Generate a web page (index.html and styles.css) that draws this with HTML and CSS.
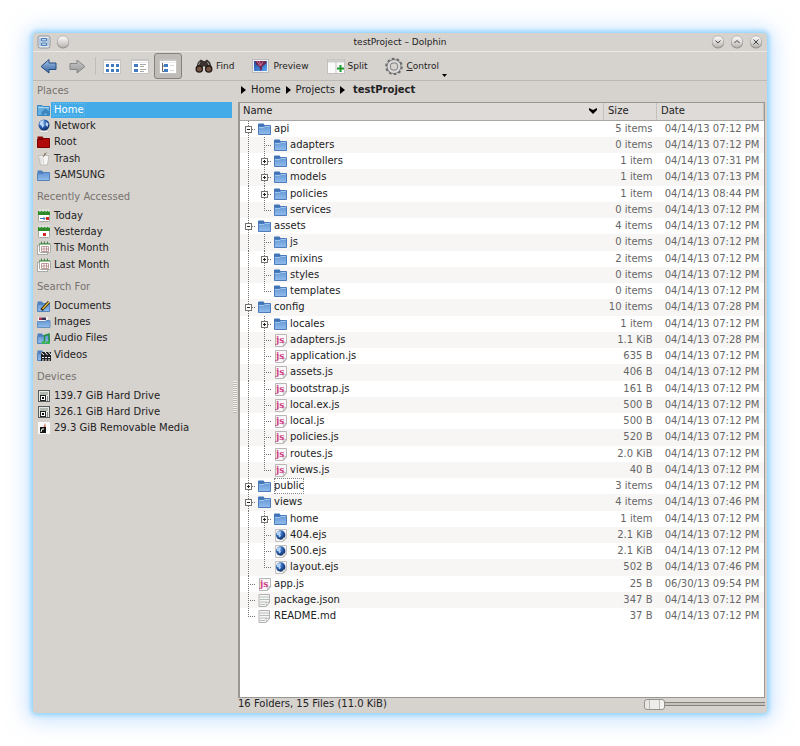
FILE: index.html
```html
<!DOCTYPE html>
<html lang="en">
<head>
    <meta charset="UTF-8">
    <meta name="viewport" content="width=device-width, initial-scale=1.0">
    <title>testProject – Dolphin</title>
    <link rel="stylesheet" href="styles.css">
</head>
<body>
    <!-- icon sprite -->
    <svg class="sprite" width="0" height="0" aria-hidden="true">
        <defs>
            <linearGradient id="blue" x1="0" y1="0" x2="0" y2="1"><stop offset="0" stop-color="#6396d3"/><stop offset="1" stop-color="#92bdec"/></linearGradient>
            <linearGradient id="silver" x1="0" y1="0" x2="0" y2="1"><stop offset="0" stop-color="#ffffff"/><stop offset="1" stop-color="#b9b5b1"/></linearGradient>
            <linearGradient id="arrow" x1="0" y1="0" x2="0" y2="1"><stop offset="0" stop-color="#a5c4ea"/><stop offset="1" stop-color="#32619f"/></linearGradient>
            <linearGradient id="grayArrow" x1="0" y1="0" x2="0" y2="1"><stop offset="0" stop-color="#c9c9c9"/><stop offset="1" stop-color="#969696"/></linearGradient>
            <linearGradient id="photo" x1="0" y1="0" x2="1" y2="1"><stop offset="0" stop-color="#1f4fa8"/><stop offset="1" stop-color="#58a5ee"/></linearGradient>
            <radialGradient id="earth" cx=".35" cy=".3" r=".8"><stop offset="0" stop-color="#7fb0ea"/><stop offset=".5" stop-color="#2559a8"/><stop offset="1" stop-color="#0b2557"/></radialGradient>
        </defs>

        <!-- tree guides -->
        <symbol id="g-line" viewBox="0 0 16 17"><path d="M8.5 0V17" class="dots"/></symbol>
        <symbol id="g-tee" viewBox="0 0 16 17"><path d="M8.5 0V17M10 8.500H16" class="dots"/></symbol>
        <symbol id="g-end" viewBox="0 0 16 17"><path d="M8.500 0V9M10 8.500H16" class="dots"/></symbol>
        <symbol id="g-box" viewBox="0 0 16 17"><path d="M8.500 0V17M12 8.500H16" class="dots"/><rect x="5.500" y="5.500" width="6" height="6" fill="#fff" stroke="#77736f"/><path d="M7 8.500H10" stroke="#222"/></symbol>
        <symbol id="g-plus" viewBox="0 0 16 17"><use href="#g-box"/><path d="M8.500 7V10" stroke="#222"/></symbol>

        <symbol id="folder" viewBox="0 0 16 16">
            <path d="M2 3.500L2.500 2.500H7.500L8.500 4H14V9H2Z" fill="#3f74b8"/>
            <path d="M2.500 5.500H7.500L8.500 4.500H14.500V13.500H2.500Z" fill="url(#blue)" stroke="#4c7dba"/>
            <path d="M3 6.500H8L9 5.500H14" stroke="#9fc5ee" fill="none"/>
        </symbol>
        <symbol id="page" viewBox="0 0 16 16">
            <path d="M3.500 2.500H14.500V11L11.500 14.500H3.500Z" fill="#fbf7f9" stroke="#b9b5b5"/>
            <path d="M14 10.500L11.500 14L11 11Z" fill="#fff" stroke="#999" stroke-width=".6"/>
        </symbol>
        <symbol id="ejs" viewBox="0 0 16 16">
            <path d="M3.500 2.500H14.500V11L11.500 14.500H3.500Z" fill="#f5f5f5" stroke="#c4c2c0"/>
            <circle cx="8.700" cy="8" r="4.700" fill="url(#earth)"/>
            <path d="M5 5.500Q7 3.500 9 4.500L8 7L9 9L7 10.500L6.500 8L5 8Z" fill="#b5d4f6"/>
            <path d="M14 10.500L11.500 14L11 11Z" fill="#fff" stroke="#aaa" stroke-width=".6"/>
        </symbol>
        <symbol id="text" viewBox="0 0 16 16">
            <path d="M3 2.500H13.500V10.500L10 14.500H3Z" fill="#f7f7f7" stroke="#b2b0ae"/>
            <path d="M4 5H13M4 7.500H13M4 10H11M4 12.500H9" stroke="#b4bcbb"/>
            <path d="M13.500 10L10.500 14L10 10.500Z" fill="#fff" stroke="#999" stroke-width=".6"/>
        </symbol>

        <symbol id="home" viewBox="0 0 14 14">
            <path d="M.5 2.500H5L6 3.500H12.500V12.500H.5Z" fill="#66aee0" stroke="#3987c2"/>
            <path d="M1 4.500H12" stroke="#a6d7f5"/>
            <path d="M4.500 13V9L8.500 5.500L12.500 9V13H10V10.500H7V13Z" fill="#3e86bf"/>
        </symbol>
        <symbol id="network" viewBox="0 0 14 14">
            <ellipse cx="7" cy="12.500" rx="5" ry="1.200" fill="#f0efee" stroke="#b5b1ad" stroke-width=".5"/>
            <circle cx="7" cy="6" r="5.500" fill="url(#earth)"/>
            <path d="M3 3Q5 .8 7 1.500L6 4.500L7.500 6L5.500 9L4.500 6.500L2.500 5.500ZM9 3L11.500 4.500L10.500 8L8.500 6Z" fill="#bcd7f6"/>
        </symbol>
        <symbol id="root" viewBox="0 0 14 14">
            <path d="M.5 1.500H5.500L6.500 3H12V5H.5Z" fill="#8b0000"/>
            <path d="M.5 4.500H6L7 3.500H12.500V12.500H.5Z" fill="#b00a0a" stroke="#780000"/>
        </symbol>
        <symbol id="trash" viewBox="0 0 14 14">
            <path d="M1.500 3.500H12L10.500 13H3.500Z" fill="#f6f6f5" stroke="#c0bdba"/>
            <path d="M4 5V12M6 5L6.500 12" stroke="#d4d2cf"/>
            <path d="M6 5L9.500 .5M7.500 4L8 1" stroke="#8b7a61" fill="none"/>
        </symbol>
        <symbol id="cal-day" viewBox="0 0 14 14">
            <rect x="1.500" y="2.500" width="11" height="10" rx="1" fill="#fff" stroke="#a5a5a1"/>
            <path d="M1 2H13V6H1Z" fill="#2b8b2b"/><path d="M3 0V3M6 0V3M9 0V3M12 0V3" stroke="#e6f3e4"/>
            <rect x="6" y="8" width="3" height="3" fill="#ce2525"/>
        </symbol>
        <symbol id="cal-today" viewBox="0 0 14 14">
            <rect x="1.500" y="2.500" width="11" height="10" rx="1" fill="#fff" stroke="#a5a5a1"/>
            <path d="M1 2H13V6H1Z" fill="#2b8b2b"/><path d="M3 0V3M6 0V3M9 0V3M12 0V3" stroke="#e6f3e4"/>
            <path d="M3 9.500H8M6.500 8L8 9.500L6.500 11" stroke="#3c79bd" fill="none"/><rect x="9" y="8" width="3" height="3" fill="#ce2525"/>
        </symbol>
        <symbol id="cal-month" viewBox="0 0 14 14">
            <rect x=".5" y="4.500" width="10" height="9" fill="#fff" stroke="#aaa"/>
            <rect x="2.500" y="2.500" width="11" height="9" rx="1" fill="#fff" stroke="#a5a5a1"/>
            <path d="M2 3H13" stroke="#2b8b2b"/><path d="M4.500 .5V3M7.500 .5V3M10.500 .5V3" stroke="#4c8050"/>
            <path d="M4.500 5.500H11.500V10.500H4.500ZM4 8H12M7 5V11M9.500 5V11" fill="none" stroke="#b68585" stroke-width=".8"/>
        </symbol>
        <symbol id="place-folder" viewBox="0 0 14 14">
            <path d="M.5 2.500H5L6 4H12V6H.5Z" fill="#4b7fc0"/>
            <path d="M.5 5.500H6L7 4.500H12.500V12.500H.5Z" fill="url(#blue)" stroke="#5583bc"/>
        </symbol>
        <symbol id="documents" viewBox="0 0 14 14">
            <use href="#place-folder"/>
            <path d="M4.500 11L12 3" stroke="#2d2412" stroke-width="3"/><path d="M5.500 10L12 3" stroke="#efc53d" stroke-width="1.300"/>
        </symbol>
        <symbol id="images" viewBox="0 0 14 14">
            <path d="M1 2H11V8H1Z" fill="#f7f1f4"/><path d="M2 2.500H5V5H2Z" fill="#a93252"/><path d="M5 2.500H9V5H5Z" fill="#363052"/>
            <path d="M.5 6.500H8L9 5.500H13V12.500H.5Z" fill="url(#blue)" stroke="#6890bf"/>
        </symbol>
        <symbol id="audio" viewBox="0 0 14 14">
            <use href="#place-folder"/>
            <path d="M7.500 11V4.500L12 3V11" stroke="#239239" stroke-width="1.500" fill="none"/>
            <ellipse cx="6.500" cy="11.500" rx="2" ry="1.500" fill="#35b84d"/><ellipse cx="11" cy="11.500" rx="2" ry="1.500" fill="#35b84d"/>
        </symbol>
        <symbol id="videos" viewBox="0 0 14 14">
            <use href="#place-folder"/>
            <path d="M4 4H14V13H4Z" fill="#202126"/><path d="M4 4.500L7 7M8 4L10.500 7M11.500 4L14 7" stroke="#fff"/>
            <path d="M5 9.500H13M5 12H13" stroke="#eee" stroke-dasharray="2 1"/>
        </symbol>
        <symbol id="drive" viewBox="0 0 14 14">
            <rect x="1.500" y="1.500" width="11" height="11" fill="#e7e9e5" stroke="#595d59"/>
            <path d="M3 3H11V6H3Z" fill="#aeb7b0"/>
            <rect x="3.500" y="6.500" width="5" height="5" fill="#fff" stroke="#222"/><rect x="5" y="8" width="2" height="2" fill="#111"/>
            <path d="M10.500 7V12" stroke="#889188"/>
        </symbol>
        <symbol id="removable" viewBox="0 0 14 14">
            <path d="M1 1H13V13H1Z" fill="#f9f9f8"/><path d="M3 6H9V12H3Z" fill="#161616"/>
            <path d="M4 11L5 8H7" stroke="#fff" fill="none"/><path d="M6.500 6L8 2L9 6Z" fill="#d47a5f"/>
        </symbol>

        <!-- toolbar icons -->
        <symbol id="back" viewBox="0 0 18 18"><path d="M1 9.500L9 2.500V6H16V12.500H9V16Z" fill="url(#arrow)" stroke="#254c7f" stroke-linejoin="round"/></symbol>
        <symbol id="forward" viewBox="0 0 18 18"><path d="M17 9.500L9 3V6.500H2V12.500H9V16Z" fill="url(#grayArrow)" stroke="#888" stroke-linejoin="round"/></symbol>
        <symbol id="sheet" viewBox="0 0 18 18"><rect x=".5" y="2.500" width="17" height="14" fill="#fff" stroke="#c7c5c3"/><path d="M1 3.500H17" stroke="#c9c9c9"/><path d="M1 5.500H17" stroke="#ececec"/></symbol>
        <symbol id="view-icons" viewBox="0 0 18 18"><use href="#sheet"/><path d="M3 7H6V10H3ZM8 7H11V10H8ZM13 7H16V10H13ZM3 12H6V15H3ZM8 12H11V15H8ZM13 12H16V15H13Z" fill="#407ac0"/></symbol>
        <symbol id="view-details" viewBox="0 0 18 18"><use href="#sheet"/><path d="M3 7H7V10H3ZM3 12H7V15H3Z" fill="#407ac0"/><path d="M9 7.500H15M9 9.500H13M9 12.500H15M9 14.500H13" stroke="#aaa"/></symbol>
        <symbol id="view-tree" viewBox="0 0 18 18"><use href="#sheet"/><path d="M3.500 6V14.500H6M3.500 9H6" fill="none" stroke="#666"/><path d="M5 7H9V10H5ZM5 12H9V15H5Z" fill="#407ac0"/><path d="M11 8.500H15M11 13.500H15" stroke="#d5d5d5"/></symbol>
        <symbol id="find" viewBox="0 0 18 18">
            <path d="M3 5L6 2.500L8.500 4H10L12 2.500L15 5L17 11H11L9 9L7 11H1Z" fill="#39322f"/>
            <circle cx="4.300" cy="12" r="3.800" fill="#251d1a"/><circle cx="13.700" cy="12" r="3.800" fill="#251d1a"/>
            <circle cx="4.300" cy="12.200" r="2.400" fill="#785542"/><circle cx="13.700" cy="12.200" r="2.400" fill="#785542"/>
            <path d="M5 5L3.500 8M12.500 5L14 8" stroke="#aaa09b"/>
        </symbol>
        <symbol id="preview" viewBox="0 0 18 18">
            <rect x=".5" y="2.500" width="16" height="13" fill="#edf1f6" stroke="#bbb"/><path d="M2 4H15V14H2Z" fill="url(#photo)"/>
            <path d="M3 4H14L14.500 6L10 10L9.500 13.500H8L7.500 10L4 7.500Z" fill="#6d2850"/><path d="M5 4L8 9M7.500 4L8.500 8M11 4.500L8.500 9" stroke="#cf6c92" fill="none"/>
        </symbol>
        <symbol id="split" viewBox="0 0 18 18"><rect x=".5" y="2.500" width="17" height="14" fill="#fafafa" stroke="#c2c0be"/><path d="M1 4H17" stroke="#d0cecd" stroke-width="3"/><path d="M9 5V16" stroke="#c7c5c3"/><path d="M13.500 8V15M10 11.500H17" stroke="#1d9c2c" stroke-width="2"/></symbol>
        <symbol id="control" viewBox="0 0 18 18">
            <circle cx="9" cy="9.500" r="7.500" fill="none" stroke="#6c6c6c" stroke-width="2.500" stroke-dasharray="2.600 2.110"/>
            <circle cx="9" cy="9.500" r="5.300" fill="none" stroke="#6c6c6c" stroke-width="4"/><circle cx="9" cy="9.500" r="5.300" fill="none" stroke="#d8d8d8" stroke-width="2.600"/>
        </symbol>
        <symbol id="app" viewBox="0 0 14 14"><rect x="1" y="1" width="12" height="12" rx="2" fill="#e9edf2" stroke="#8d949b"/><path d="M3 3V11M11 3V11" stroke="#7ea5d0"/><path d="M4.500 3.500H9.500V6H4.500ZM4.500 8H9.500V10.500H4.500Z" fill="#b8d5f2" stroke="#4a7bb3"/></symbol>
        <symbol id="knob" viewBox="0 0 14 14"><circle cx="7" cy="7.500" r="6" fill="#8c8884"/><circle cx="7" cy="6.700" r="5.800" fill="url(#silver)" stroke="#aaa6a2" stroke-width=".6"/></symbol>
    </svg>

    <div class="window">
        <header class="titlebar">
            <div class="knobs">
                <button aria-label="Window menu"><svg width="14" height="14"><use href="#app"/></svg></button>
                <button aria-label="All desktops"><svg width="14" height="14"><use href="#knob"/></svg></button>
            </div>
            <h1>testProject – Dolphin</h1>
            <div class="knobs right">
                <button aria-label="Minimize"><svg width="14" height="14"><use href="#knob"/><path d="M4.500 5.500L7 8L9.500 5.500" class="mark"/></svg></button>
                <button aria-label="Maximize"><svg width="14" height="14"><use href="#knob"/><path d="M4.500 8L7 5.500L9.500 8" class="mark"/></svg></button>
                <button aria-label="Close"><svg width="14" height="14"><use href="#knob"/><path d="M4.500 4.500L9.500 9.500M9.500 4.500L4.500 9.500" class="mark"/></svg></button>
            </div>
        </header>

        <div class="toolbar">
            <button aria-label="Back"><svg width="18" height="18"><use href="#back"/></svg></button>
            <button aria-label="Forward"><svg width="18" height="18"><use href="#forward"/></svg></button>
            <span class="divider"></span>
            <button aria-label="Icons"><svg width="18" height="18"><use href="#view-icons"/></svg></button>
            <button aria-label="Compact"><svg width="18" height="18"><use href="#view-details"/></svg></button>
            <button class="pressed" aria-label="Details"><svg width="18" height="18"><use href="#view-tree"/></svg></button>
            <button class="labelled"><svg width="18" height="18"><use href="#find"/></svg>Find</button>
            <button class="labelled"><svg width="18" height="18"><use href="#preview"/></svg>Preview</button>
            <button class="labelled"><svg width="18" height="18"><use href="#split"/></svg>Split</button>
            <button class="labelled menu"><svg width="18" height="18"><use href="#control"/></svg><span><u>C</u>ontrol</span><svg class="drop" width="5" height="3"><path d="M0 0H5L2.500 3Z"/></svg></button>
        </div>

        <div class="content">
            <nav class="places">
                <section>
                    <h2>Places</h2>
                    <ul>
                        <li><svg width="14" height="14"><use href="#home"/></svg><a href="#" class="selected"><span>Home</span></a></li>
                        <li><svg width="14" height="14"><use href="#network"/></svg><a href="#">Network</a></li>
                        <li><svg width="14" height="14"><use href="#root"/></svg><a href="#">Root</a></li>
                        <li><svg width="14" height="14"><use href="#trash"/></svg><a href="#">Trash</a></li>
                        <li><svg width="14" height="14"><use href="#place-folder"/></svg><a href="#">SAMSUNG</a></li>
                    </ul>
                </section>
                <section>
                    <h2>Recently Accessed</h2>
                    <ul>
                        <li><svg width="14" height="14"><use href="#cal-today"/></svg><a href="#">Today</a></li>
                        <li><svg width="14" height="14"><use href="#cal-day"/></svg><a href="#">Yesterday</a></li>
                        <li><svg width="14" height="14"><use href="#cal-month"/></svg><a href="#">This Month</a></li>
                        <li><svg width="14" height="14"><use href="#cal-month"/></svg><a href="#">Last Month</a></li>
                    </ul>
                </section>
                <section>
                    <h2>Search For</h2>
                    <ul>
                        <li><svg width="14" height="14"><use href="#documents"/></svg><a href="#">Documents</a></li>
                        <li><svg width="14" height="14"><use href="#images"/></svg><a href="#">Images</a></li>
                        <li><svg width="14" height="14"><use href="#audio"/></svg><a href="#">Audio Files</a></li>
                        <li><svg width="14" height="14"><use href="#videos"/></svg><a href="#">Videos</a></li>
                    </ul>
                </section>
                <section>
                    <h2>Devices</h2>
                    <ul>
                        <li><svg width="14" height="14"><use href="#drive"/></svg><a href="#">139.7 GiB Hard Drive</a></li>
                        <li><svg width="14" height="14"><use href="#drive"/></svg><a href="#">326.1 GiB Hard Drive</a></li>
                        <li><svg width="14" height="14"><use href="#removable"/></svg><a href="#">29.3 GiB Removable Media</a></li>
                    </ul>
                </section>
            </nav>

            <div class="splitter"><span></span></div>

            <main>
                <nav class="crumbs">
                    <svg width="5" height="8"><path d="M0 0L5 4L0 8Z"/></svg><a href="#">Home</a>
                    <svg width="5" height="8"><path d="M0 0L5 4L0 8Z"/></svg><a href="#">Projects</a>
                    <svg width="5" height="8"><path d="M0 0L5 4L0 8Z"/></svg><a href="#" class="current">testProject</a>
                </nav>

                <div class="listing">
                    <table>
                        <thead>
                            <tr>
                                <th><div class="sort">Name<svg width="8" height="6"><path d="M0 0L4 2L8 0V2L4 6L0 2Z"/></svg></div></th>
                                <th class="size">Size</th>
                                <th class="date">Date</th>
                            </tr>
                        </thead>
                        <tbody>
                            <tr><td><div class="node"><button aria-label="Collapse"><svg class="guide"><use href="#g-box"/></svg></button><svg class="icon"><use href="#folder"/></svg><span>api</span></div></td><td>5 items</td><td>04/14/13 07:12 PM</td></tr>
                            <tr><td><div class="node"><svg class="guide"><use href="#g-line"/></svg><svg class="guide"><use href="#g-tee"/></svg><svg class="icon"><use href="#folder"/></svg><span>adapters</span></div></td><td>0 items</td><td>04/14/13 07:12 PM</td></tr>
                            <tr><td><div class="node"><svg class="guide"><use href="#g-line"/></svg><button aria-label="Expand"><svg class="guide"><use href="#g-plus"/></svg></button><svg class="icon"><use href="#folder"/></svg><span>controllers</span></div></td><td>1 item</td><td>04/14/13 07:31 PM</td></tr>
                            <tr><td><div class="node"><svg class="guide"><use href="#g-line"/></svg><button aria-label="Expand"><svg class="guide"><use href="#g-plus"/></svg></button><svg class="icon"><use href="#folder"/></svg><span>models</span></div></td><td>1 item</td><td>04/14/13 07:13 PM</td></tr>
                            <tr><td><div class="node"><svg class="guide"><use href="#g-line"/></svg><button aria-label="Expand"><svg class="guide"><use href="#g-plus"/></svg></button><svg class="icon"><use href="#folder"/></svg><span>policies</span></div></td><td>1 item</td><td>04/14/13 08:44 PM</td></tr>
                            <tr><td><div class="node"><svg class="guide"><use href="#g-line"/></svg><svg class="guide"><use href="#g-end"/></svg><svg class="icon"><use href="#folder"/></svg><span>services</span></div></td><td>0 items</td><td>04/14/13 07:12 PM</td></tr>
                            <tr><td><div class="node"><button aria-label="Collapse"><svg class="guide"><use href="#g-box"/></svg></button><svg class="icon"><use href="#folder"/></svg><span>assets</span></div></td><td>4 items</td><td>04/14/13 07:12 PM</td></tr>
                            <tr><td><div class="node"><svg class="guide"><use href="#g-line"/></svg><svg class="guide"><use href="#g-tee"/></svg><svg class="icon"><use href="#folder"/></svg><span>js</span></div></td><td>0 items</td><td>04/14/13 07:12 PM</td></tr>
                            <tr><td><div class="node"><svg class="guide"><use href="#g-line"/></svg><button aria-label="Expand"><svg class="guide"><use href="#g-plus"/></svg></button><svg class="icon"><use href="#folder"/></svg><span>mixins</span></div></td><td>2 items</td><td>04/14/13 07:12 PM</td></tr>
                            <tr><td><div class="node"><svg class="guide"><use href="#g-line"/></svg><svg class="guide"><use href="#g-tee"/></svg><svg class="icon"><use href="#folder"/></svg><span>styles</span></div></td><td>0 items</td><td>04/14/13 07:12 PM</td></tr>
                            <tr><td><div class="node"><svg class="guide"><use href="#g-line"/></svg><svg class="guide"><use href="#g-end"/></svg><svg class="icon"><use href="#folder"/></svg><span>templates</span></div></td><td>0 items</td><td>04/14/13 07:12 PM</td></tr>
                            <tr><td><div class="node"><button aria-label="Collapse"><svg class="guide"><use href="#g-box"/></svg></button><svg class="icon"><use href="#folder"/></svg><span>config</span></div></td><td>10 items</td><td>04/14/13 07:28 PM</td></tr>
                            <tr><td><div class="node"><svg class="guide"><use href="#g-line"/></svg><button aria-label="Expand"><svg class="guide"><use href="#g-plus"/></svg></button><svg class="icon"><use href="#folder"/></svg><span>locales</span></div></td><td>1 item</td><td>04/14/13 07:12 PM</td></tr>
                            <tr><td><div class="node"><svg class="guide"><use href="#g-line"/></svg><svg class="guide"><use href="#g-tee"/></svg><svg class="icon"><use href="#page"/><text x="4" y="11" class="js-mark">js</text></svg><span>adapters.js</span></div></td><td>1.1 KiB</td><td>04/14/13 07:28 PM</td></tr>
                            <tr><td><div class="node"><svg class="guide"><use href="#g-line"/></svg><svg class="guide"><use href="#g-tee"/></svg><svg class="icon"><use href="#page"/><text x="4" y="11" class="js-mark">js</text></svg><span>application.js</span></div></td><td>635 B</td><td>04/14/13 07:12 PM</td></tr>
                            <tr><td><div class="node"><svg class="guide"><use href="#g-line"/></svg><svg class="guide"><use href="#g-tee"/></svg><svg class="icon"><use href="#page"/><text x="4" y="11" class="js-mark">js</text></svg><span>assets.js</span></div></td><td>406 B</td><td>04/14/13 07:12 PM</td></tr>
                            <tr><td><div class="node"><svg class="guide"><use href="#g-line"/></svg><svg class="guide"><use href="#g-tee"/></svg><svg class="icon"><use href="#page"/><text x="4" y="11" class="js-mark">js</text></svg><span>bootstrap.js</span></div></td><td>161 B</td><td>04/14/13 07:12 PM</td></tr>
                            <tr><td><div class="node"><svg class="guide"><use href="#g-line"/></svg><svg class="guide"><use href="#g-tee"/></svg><svg class="icon"><use href="#page"/><text x="4" y="11" class="js-mark">js</text></svg><span>local.ex.js</span></div></td><td>500 B</td><td>04/14/13 07:12 PM</td></tr>
                            <tr><td><div class="node"><svg class="guide"><use href="#g-line"/></svg><svg class="guide"><use href="#g-tee"/></svg><svg class="icon"><use href="#page"/><text x="4" y="11" class="js-mark">js</text></svg><span>local.js</span></div></td><td>500 B</td><td>04/14/13 07:12 PM</td></tr>
                            <tr><td><div class="node"><svg class="guide"><use href="#g-line"/></svg><svg class="guide"><use href="#g-tee"/></svg><svg class="icon"><use href="#page"/><text x="4" y="11" class="js-mark">js</text></svg><span>policies.js</span></div></td><td>520 B</td><td>04/14/13 07:12 PM</td></tr>
                            <tr><td><div class="node"><svg class="guide"><use href="#g-line"/></svg><svg class="guide"><use href="#g-tee"/></svg><svg class="icon"><use href="#page"/><text x="4" y="11" class="js-mark">js</text></svg><span>routes.js</span></div></td><td>2.0 KiB</td><td>04/14/13 07:12 PM</td></tr>
                            <tr><td><div class="node"><svg class="guide"><use href="#g-line"/></svg><svg class="guide"><use href="#g-end"/></svg><svg class="icon"><use href="#page"/><text x="4" y="11" class="js-mark">js</text></svg><span>views.js</span></div></td><td>40 B</td><td>04/14/13 07:12 PM</td></tr>
                            <tr><td><div class="node"><button aria-label="Expand"><svg class="guide"><use href="#g-plus"/></svg></button><svg class="icon"><use href="#folder"/></svg><span class="focused">public</span></div></td><td>3 items</td><td>04/14/13 07:12 PM</td></tr>
                            <tr><td><div class="node"><button aria-label="Collapse"><svg class="guide"><use href="#g-box"/></svg></button><svg class="icon"><use href="#folder"/></svg><span>views</span></div></td><td>4 items</td><td>04/14/13 07:46 PM</td></tr>
                            <tr><td><div class="node"><svg class="guide"><use href="#g-line"/></svg><button aria-label="Expand"><svg class="guide"><use href="#g-plus"/></svg></button><svg class="icon"><use href="#folder"/></svg><span>home</span></div></td><td>1 item</td><td>04/14/13 07:12 PM</td></tr>
                            <tr><td><div class="node"><svg class="guide"><use href="#g-line"/></svg><svg class="guide"><use href="#g-tee"/></svg><svg class="icon"><use href="#ejs"/></svg><span>404.ejs</span></div></td><td>2.1 KiB</td><td>04/14/13 07:12 PM</td></tr>
                            <tr><td><div class="node"><svg class="guide"><use href="#g-line"/></svg><svg class="guide"><use href="#g-tee"/></svg><svg class="icon"><use href="#ejs"/></svg><span>500.ejs</span></div></td><td>2.1 KiB</td><td>04/14/13 07:12 PM</td></tr>
                            <tr><td><div class="node"><svg class="guide"><use href="#g-line"/></svg><svg class="guide"><use href="#g-end"/></svg><svg class="icon"><use href="#ejs"/></svg><span>layout.ejs</span></div></td><td>502 B</td><td>04/14/13 07:46 PM</td></tr>
                            <tr><td><div class="node"><svg class="guide"><use href="#g-tee"/></svg><svg class="icon"><use href="#page"/><text x="4" y="11" class="js-mark">js</text></svg><span>app.js</span></div></td><td>25 B</td><td>06/30/13 09:54 PM</td></tr>
                            <tr><td><div class="node"><svg class="guide"><use href="#g-tee"/></svg><svg class="icon"><use href="#text"/></svg><span>package.json</span></div></td><td>347 B</td><td>04/14/13 07:12 PM</td></tr>
                            <tr><td><div class="node"><svg class="guide"><use href="#g-end"/></svg><svg class="icon"><use href="#text"/></svg><span>README.md</span></div></td><td>37 B</td><td>04/14/13 07:12 PM</td></tr>
                        </tbody>
                    </table>
                </div>

                <footer class="status">
                    <span>16 Folders, 15 Files (11.0 KiB)</span>
                    <input type="range" min="0" max="10" value="0" aria-label="Zoom">
                </footer>
            </main>
        </div>
    </div>
</body>
</html>
```
FILE: styles.css
```css
* {
    box-sizing: border-box;
}

body {
    margin: 0;
    padding: 33px;
    min-height: 100vh;
    display: flex;
    background: #fff;
    color: #222;
    font-family: "DejaVu Sans", sans-serif;
    font-size: 10px;
    line-height: 16px;
}

h1, h2, ul {
    margin: 0;
    padding: 0;
    font-size: inherit;
    font-weight: normal;
}

a {
    color: inherit;
    text-decoration: none;
}

button {
    margin: 0;
    padding: 0;
    border: 0;
    background: none;
    color: inherit;
    font: inherit;
}

svg {
    display: block;
    flex: none;
}

.sprite {
    position: absolute;
}

.window {
    flex: 1;
    display: flex;
    flex-direction: column;
    background: #d6d2ce;
    border-radius: 4px;
    box-shadow: 0 0 5px 2px #8fd2fa, 0 2px 20px 6px rgba(150, 200, 255, 0.5);
}

/* title bar */
.titlebar {
    display: grid;
    grid-template-columns: 1fr auto 1fr;
    align-items: center;
    height: 19px;
    padding: 0 4px;
    border-bottom: 1px solid #ebe9e7;
    font-size: 9px;
}

.knobs {
    display: flex;
    gap: 5px;
}

.knobs.right {
    justify-content: flex-end;
}

.mark {
    fill: none;
    stroke: #444;
}

/* toolbar */
.toolbar {
    display: flex;
    align-items: center;
    height: 29px;
    padding-left: 2px;
    border-bottom: 1px solid #bcb8b4;
    font-size: 9px;
}

.toolbar button {
    display: flex;
    align-items: center;
    gap: 3px;
    height: 26px;
    padding: 0 5px;
}

.toolbar .pressed {
    padding: 0 4px;
    border: 1px solid #85817d;
    border-radius: 3px;
    background: #bfbbb7;
}

.toolbar .labelled {
    margin-left: 8px;
}

.divider {
    width: 1px;
    height: 18px;
    margin: 0 2px 0 4px;
    background: #c0bcb8;
}

.toolbar .drop {
    align-self: flex-end;
    margin-bottom: 2px;
}

/* places panel */
.content {
    flex: 1;
    display: grid;
    grid-template-columns: 199px 6px 1fr;
    padding-right: 2px;
}

.places {
    padding-left: 4px;
}

.places section {
    margin-bottom: 4px;
}

.places h2 {
    padding-bottom: 2px;
    line-height: 19px;
    color: #77736f;
}

.places li {
    display: flex;
    align-items: center;
    height: 16px;
}

.places li:nth-child(4n) {
    height: 17px;
}

.places a {
    flex: 1;
    padding-left: 3px;
}

.places .selected {
    background: #43ace8;
    color: #fff;
}

.selected span {
    outline: 1px dotted #6dbbe8;
}

.splitter {
    display: flex;
    align-items: center;
    justify-content: center;
}

.splitter span {
    width: 4px;
    height: 32px;
    background: repeating-linear-gradient(#f4f2f0 0 1px, #bab6b2 1px 2px);
}

/* file view */
main {
    display: flex;
    flex-direction: column;
}

.crumbs {
    display: flex;
    align-items: center;
    gap: 5px;
    height: 21px;
    padding: 0 3px 3px;
}

.crumbs .current {
    padding-left: 3px;
    font-weight: bold;
}

.listing {
    flex: 1;
    border: 1px solid #9a9692;
    border-left-width: 2px;
    background: #fff;
}

table {
    width: 100%;
    table-layout: fixed;
    border-collapse: collapse;
}

th {
    height: 17px;
    padding: 0 4px;
    border-right: 1px solid #c5c1bd;
    border-bottom: 1px solid #aaa6a2;
    background: #dfdbd8;
    font-weight: normal;
    text-align: left;
}

th:first-child {
    padding-left: 3px;
}

.size {
    width: 53px;
}

.date {
    width: 107px;
}

.sort {
    display: flex;
    align-items: center;
    justify-content: space-between;
    padding-right: 2px;
}

td {
    height: 16px;
    padding: 0 4px 0 0;
    color: #666;
    line-height: 16px;
    text-align: right;
    white-space: nowrap;
}

tbody tr:nth-child(4n) td {
    height: 17px;
}

tbody tr:nth-child(even) {
    background: #f7f6f5;
}

.node {
    display: flex;
    height: 16px;
    color: #222;
}

.node .guide {
    width: 16px;
    height: 17px;
}

.node .icon {
    width: 16px;
    height: 16px;
    margin-right: 2px;
}

.dots {
    fill: none;
    stroke: #77736f;
    stroke-dasharray: 1 1;
}

.js-mark {
    fill: #cf3d82;
    font: bold 9px "DejaVu Serif", serif;
}

.focused {
    outline: 1px dotted #888;
    outline-offset: -1px;
}

/* status bar */
.status {
    display: flex;
    justify-content: space-between;
    height: 15px;
    line-height: 12px;
}

.status input {
    appearance: none;
    width: 121px;
    height: 12px;
    margin: 0;
    background: linear-gradient(#85817d 1px, #c5c1bd 1px 3px, #85817d 3px) 0 4px / 100% 4px no-repeat;
}

.status input::-webkit-slider-thumb {
    appearance: none;
    width: 21px;
    height: 11px;
    border: 1px solid #96928e;
    border-radius: 3px;
    background: linear-gradient(90deg, #e9e7e5 4px, #bbb 4px 5px, #efedeb 5px 14px, #bbb 14px 15px, #f5f3f1 15px);
}
```
